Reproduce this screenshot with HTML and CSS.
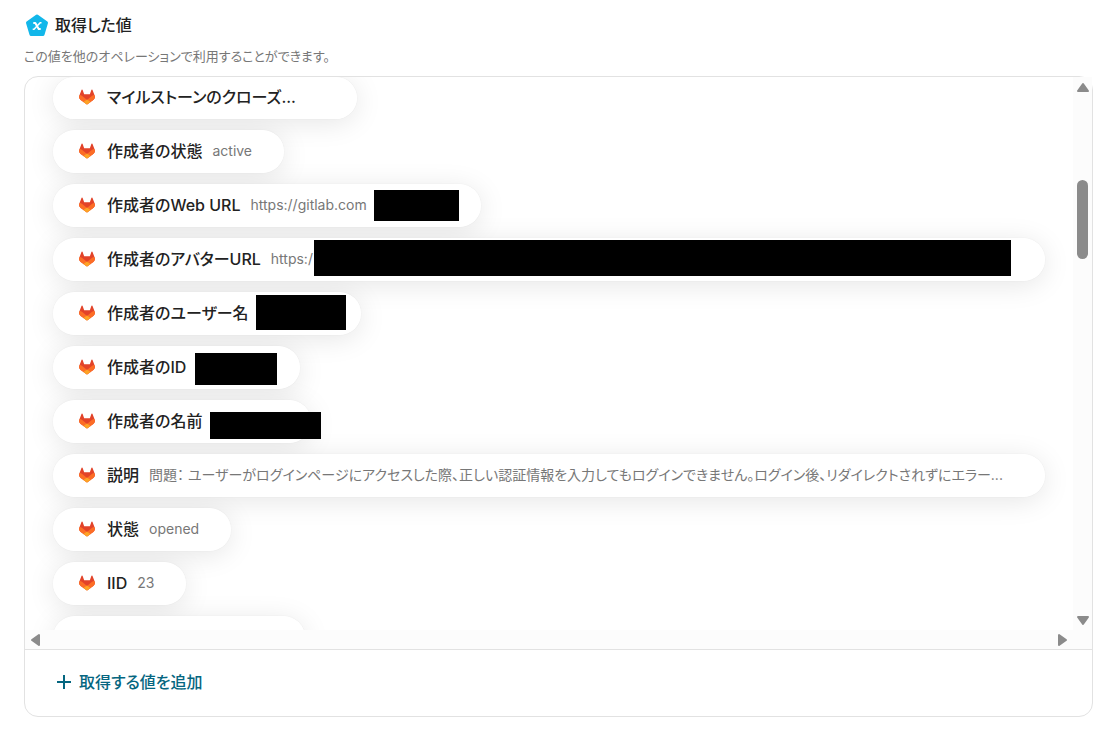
FILE: index.html
```html
<!DOCTYPE html>
<html lang="ja">
<head>
<meta charset="utf-8">
<title>取得した値</title>
<link rel="stylesheet" href="styles.css">
</head>
<body>
<svg class="defs" aria-hidden="true">
  <symbol id="fox" viewBox="0 0 18 18">
    <path fill="#e24329" d="M17.6 7.2 15.1.9a.65.65 0 0 0-1.2.1l-1.7 5H5.8l-1.7-5A.65.65 0 0 0 2.9.9L.4 7.2a4.5 4.5 0 0 0 1.5 5.2L9 17.3l7.1-4.9a4.5 4.5 0 0 0 1.5-5.2z"/>
    <path fill="#fc6d26" d="M17.6 7.2 16.800 6.800a8 8 0 0 0-2.800 1.300L9 12.400 4 8.100a8 8 0 0 0-2.800-1.300L.4 7.2a4.5 4.5 0 0 0 1.5 5.2L9 17.3l7.1-4.9a4.5 4.5 0 0 0 1.5-5.2z"/>
    <path fill="#fca326" d="M5 14.600 9 17.300l4-2.700-4-2.900z"/>
  </symbol>
</svg>
<main class="page">
  <header class="header">
    <svg class="badge" viewBox="0 0 24 24" aria-hidden="true">
      <path fill="#12b7ea" stroke="#12b7ea" stroke-width="3" stroke-linejoin="round" d="M12 3 21.500 9.800 18 21.500H6L2.500 9.800z"/>
      <path fill="none" stroke="#fff" stroke-width="2" stroke-linejoin="round" d="M8.300 10h2l3.400 6h2"/>
      <path fill="none" stroke="#fff" stroke-width="1.500" d="M16.500 9.800h-1.300L9 16.200H7.700"/>
    </svg>
    <h1 class="title">取得した値</h1>
  </header>
  <p class="note">この値を他のオペレーションで利用することができます。</p>
  <section class="card">
    <div class="viewer">
      <ul class="list">
        <li class="pill pill-first"><svg class="fox"><use href="#fox"/></svg><span class="label">マイルストーンのクローズ...</span></li>
        <li class="pill"><svg class="fox"><use href="#fox"/></svg><span class="label">作成者の状態</span><span class="value">active</span></li>
        <li class="pill pill-web"><svg class="fox"><use href="#fox"/></svg><span class="label">作成者のWeb URL</span><span class="value">https://gitlab.com</span><span class="mask mask-web"></span></li>
        <li class="pill pill-wide"><svg class="fox"><use href="#fox"/></svg><span class="label">作成者のアバターURL</span><span class="value">https:/</span><span class="mask mask-avatar"></span></li>
        <li class="pill pill-user"><svg class="fox"><use href="#fox"/></svg><span class="label">作成者のユーザー名</span><span class="mask mask-user"></span></li>
        <li class="pill pill-id"><svg class="fox"><use href="#fox"/></svg><span class="label">作成者のID</span><span class="mask mask-id"></span></li>
        <li class="pill pill-name"><svg class="fox"><use href="#fox"/></svg><span class="label">作成者の名前</span><span class="mask mask-name"></span></li>
        <li class="pill pill-wide"><svg class="fox"><use href="#fox"/></svg><span class="label">説明</span><span class="value">問題： ユーザーがログインページにアクセスした際、正しい認証情報を入力してもログインできません。ログイン後、リダイレクトされずにエラー...</span></li>
        <li class="pill"><svg class="fox"><use href="#fox"/></svg><span class="label">状態</span><span class="value">opened</span></li>
        <li class="pill"><svg class="fox"><use href="#fox"/></svg><span class="label">IID</span><span class="value">23</span></li>
        <li class="pill pill-next"></li>
      </ul>
      <div class="vbar">
        <svg class="arrow" viewBox="0 0 14 12"><path d="M7 2 12 9H2z"/></svg>
        <div class="thumb"></div>
        <svg class="arrow arrow-end" viewBox="0 0 14 12"><path d="M2 3h10L7 10z"/></svg>
      </div>
      <div class="hbar">
        <svg class="arrow-side" viewBox="0 0 12 14"><path d="M9 2v10L2 7z"/></svg>
        <svg class="arrow-side" viewBox="0 0 12 14"><path d="M2 2v10l7-5z"/></svg>
      </div>
    </div>
    <footer class="footer">
      <button class="add" type="button">
        <svg class="plus" viewBox="0 0 16 16" aria-hidden="true"><path d="M8 1v14M1 8h14"/></svg>
        <span>取得する値を追加</span>
      </button>
    </footer>
  </section>
</main>
</body>
</html>
```
FILE: styles.css
```css
* { box-sizing: border-box; }
body {
  margin: 0;
  background: #fff;
  color: #222;
  font-family: Inter, "Noto Sans CJK JP", sans-serif;
  font-feature-settings: "palt";
}
.defs { display: none; }
.page { padding: 12px 24px 24px; }
.header { display: flex; align-items: center; gap: 6px; height: 26px; padding-left: 1px; }
.badge { width: 24px; height: 24px; }
.title { margin: 0; font-size: 16px; line-height: 24px; font-weight: 500; }
.note { margin: 8px 0 10px; color: #777; font-size: 13px; line-height: 20px; }
.card { border: 1px solid #e2e2e2; border-radius: 14px; }
.viewer {
  display: grid;
  grid-template-columns: minmax(0, 1fr) 19px;
  grid-template-rows: 553px 19px;
}
.list {
  display: flex;
  flex-direction: column;
  align-items: flex-start;
  gap: 11px;
  margin: 0;
  padding: 0 28px;
  list-style: none;
  overflow: hidden;
  isolation: isolate;
  border-top-left-radius: 13px;
}
.pill {
  position: relative;
  display: flex;
  flex-shrink: 0;
  align-items: center;
  height: 43px;
  padding: 0 32px 1px 24px;
  border-radius: 22px;
  background: #fff;
  white-space: nowrap;
}
.pill::before {
  content: "";
  position: absolute;
  inset: 0;
  z-index: -1;
  border-radius: 22px;
  box-shadow: 0 0 1px rgba(0, 0, 0, .12), 0 4px 28px rgba(0, 0, 0, .1);
}
.pill-first { width: 304px; height: 42px; padding-bottom: 3px; }
.pill-web { width: 428px; }
.pill-wide { width: 100%; max-width: 992px; }
.pill-user { width: 308px; }
.pill-id { width: 247px; }
.pill-name { width: 258px; }
.pill-next { width: 252px; }
.fox { width: 16px; height: 16px; margin: 0 12px 0 2px; }
.label { font-size: 16px; line-height: 24px; font-weight: 500; }
.value { margin-left: 10px; color: #777; font-size: 14px; line-height: 20px; }
.mask { position: absolute; background: #000; }
.mask-web { left: 321px; top: 6px; width: 85px; height: 31px; }
.mask-avatar { left: 261px; top: 2px; width: 697px; height: 36px; }
.mask-user { left: 203px; top: 3px; width: 90px; height: 35px; }
.mask-id { left: 142px; top: 7px; width: 82px; height: 32px; }
.mask-name { left: 157px; top: 12px; width: 111px; height: 27px; }
.vbar {
  display: flex;
  flex-direction: column;
  align-items: center;
  padding: 5px 0 4px;
  background: #fcfcfc;
}
.arrow { width: 14px; height: 12px; }
.arrow-end { margin-top: auto; }
.arrow path, .arrow-side path { fill: #8b8b8b; stroke: #8b8b8b; stroke-width: 2; stroke-linejoin: round; }
.thumb { width: 11px; height: 79px; margin-top: 86px; border-radius: 6px; background: #8b8b8b; }
.hbar {
  grid-column: 1 / -1;
  display: flex;
  align-items: center;
  justify-content: space-between;
  padding: 0 23px 0 5px;
  background: #fcfcfc;
}
.arrow-side { width: 12px; height: 14px; }
.footer { padding: 19px 28px 21px; border-top: 1px solid #e2e2e2; }
.add {
  display: flex;
  align-items: center;
  gap: 7px;
  padding: 0 3px;
  border: 0;
  background: none;
  color: #056680;
  font: inherit;
  font-size: 16px;
  line-height: 26px;
  font-weight: 500;
  cursor: pointer;
}
.plus { width: 16px; height: 16px; fill: none; stroke: currentColor; stroke-width: 2; }
```
